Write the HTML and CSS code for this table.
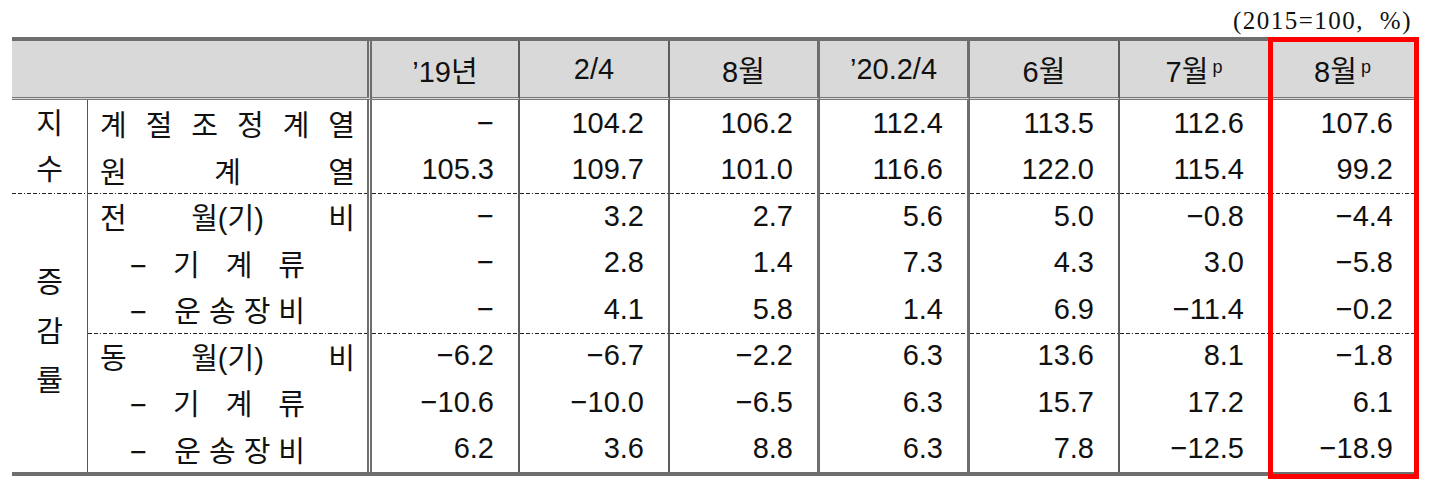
FILE: index.html
```html
<!DOCTYPE html>
<html lang="ko">
<head>
<meta charset="utf-8">
<title>지수 및 증감률</title>
<link rel="stylesheet" href="styles.css">
</head>
<body>
<div class="sheet">
  <div class="unit">(2015=100, %)</div>
  <div class="tablebox">
    <table class="stats">
      <colgroup>
        <col class="w-grp"><col class="w-lbl"><col class="w-c1"><col class="w-c"><col class="w-c"><col class="w-c"><col class="w-c"><col class="w-c"><col class="w-last">
      </colgroup>
      <thead>
        <tr class="head">
          <th colspan="2" class="bd"></th>
          <th class="b2">’19년</th>
          <th class="b2">2/4</th>
          <th class="b3">8월</th>
          <th class="b3">’20.2/4</th>
          <th class="b2">6월</th>
          <th class="b2">7월<sup>p</sup></th>
          <th>8월<sup>p</sup></th>
        </tr>
      </thead>
      <tbody>
        <tr>
          <td rowspan="2" class="grp">지<br>수</td>
          <td class="lbl bd"><span class="spread">계 절 조 정 계 열</span></td>
          <td class="num b2">−</td><td class="num b2">104.2</td><td class="num b3">106.2</td><td class="num b3">112.4</td><td class="num b2">113.5</td><td class="num b2">112.6</td><td class="num last">107.6</td>
        </tr>
        <tr>
          <td class="lbl bd"><span class="spread">원 계 열</span></td>
          <td class="num b2">105.3</td><td class="num b2">109.7</td><td class="num b3">101.0</td><td class="num b3">116.6</td><td class="num b2">122.0</td><td class="num b2">115.4</td><td class="num last">99.2</td>
        </tr>
        <tr class="sep">
          <td rowspan="6" class="grp grp-tall">증<br>감<br>률</td>
          <td class="lbl bd"><span class="spread">전 월(기) 비</span></td>
          <td class="num b2">−</td><td class="num b2">3.2</td><td class="num b3">2.7</td><td class="num b3">5.6</td><td class="num b2">5.0</td><td class="num b2">−0.8</td><td class="num last">−4.4</td>
        </tr>
        <tr>
          <td class="lbl bd"><span class="spread sub">− 기 계 류</span></td>
          <td class="num b2">−</td><td class="num b2">2.8</td><td class="num b3">1.4</td><td class="num b3">7.3</td><td class="num b2">4.3</td><td class="num b2">3.0</td><td class="num last">−5.8</td>
        </tr>
        <tr>
          <td class="lbl bd"><span class="spread sub">− <span class="tight">운송장비</span></span></td>
          <td class="num b2">−</td><td class="num b2">4.1</td><td class="num b3">5.8</td><td class="num b3">1.4</td><td class="num b2">6.9</td><td class="num b2">−11.4</td><td class="num last">−0.2</td>
        </tr>
        <tr class="sep">
          <td class="lbl bd"><span class="spread">동 월(기) 비</span></td>
          <td class="num b2">−6.2</td><td class="num b2">−6.7</td><td class="num b3">−2.2</td><td class="num b3">6.3</td><td class="num b2">13.6</td><td class="num b2">8.1</td><td class="num last">−1.8</td>
        </tr>
        <tr>
          <td class="lbl bd"><span class="spread sub">− 기 계 류</span></td>
          <td class="num b2">−10.6</td><td class="num b2">−10.0</td><td class="num b3">−6.5</td><td class="num b3">6.3</td><td class="num b2">15.7</td><td class="num b2">17.2</td><td class="num last">6.1</td>
        </tr>
        <tr>
          <td class="lbl bd"><span class="spread sub">− <span class="tight">운송장비</span></span></td>
          <td class="num b2">6.2</td><td class="num b2">3.6</td><td class="num b3">8.8</td><td class="num b3">6.3</td><td class="num b2">7.8</td><td class="num b2">−12.5</td><td class="num last">−18.9</td>
        </tr>
      </tbody>
    </table>
    <div class="mark"></div>
  </div>
</div>
</body>
</html>
```

FILE: styles.css
```css
* { box-sizing: border-box; }
html, body { margin: 0; padding: 0; background: #fff; }
body {
  font-family: "Liberation Sans", "Noto Sans CJK KR", sans-serif;
  color: #111;
}
.sheet {
  width: 1430px;
  height: 490px;
  padding-left: 12px;
  overflow: hidden;
}
.unit {
  width: 1403px;
  height: 37px;
  padding: 4px 3px 0 0;
  text-align: right;
  font-family: "Liberation Serif", "Noto Sans CJK KR", serif;
  font-size: 25px;
  line-height: 33px;
  letter-spacing: 1.5px;
  word-spacing: 8px;
  white-space: nowrap;
}
.tablebox {
  position: relative;
  width: 1403px;
}
.stats {
  width: 1403px;
  table-layout: fixed;
  border-collapse: separate;
  border-spacing: 0;
  border-top: 4px solid #6e6e6e;
  border-bottom: 4px solid #6e6e6e;
  font-size: 29px;
}
.w-grp { width: 76px; }
.w-lbl { width: 284px; }
.w-c1 { width: 148px; }
.w-c { width: 150px; }
.w-last { width: 145px; }

.stats th, .stats td { padding: 0; }
.stats .head th {
  height: 59px;
  background: #d9d9d9;
  font-weight: normal;
  text-align: center;
  border-bottom: 3px double #777;
  white-space: nowrap;
}
.head sup {
  font-size: 18px;
  line-height: 0;
  vertical-align: 9px;
  margin-left: 4px;
}
.stats tbody td { height: 46.5px; }

.stats .bd { border-right: 5px double #6e6e6e; }
.stats .b2 { border-right: 2px solid #5c5c5c; }
.stats .b3 { border-right: 3px solid #6e6e6e; }

.stats .grp {
  text-align: center;
  line-height: 46px;
  border-right: 1px solid #555;
}
.stats .grp-tall { line-height: 49px; }

.stats .lbl { padding: 0 12px 0 12px; }
.spread {
  display: block;
  text-align: justify;
  text-align-last: justify;
  white-space: nowrap;
}
.spread.sub {
  margin-left: 30px;
  width: 175px;
}
.tight {
  letter-spacing: 8px;
  margin-right: -8px;
}

.stats .num {
  text-align: right;
  padding-right: 24px;
  white-space: nowrap;
}
.stats .num.last { padding-right: 22px; }

.stats .sep td {
  background-image: repeating-linear-gradient(90deg, #222 0 4px, transparent 4px 6px, #222 6px 10px, transparent 10px 12px, #222 12px 13px, transparent 13px 15px);
  background-size: 100% 1px;
  background-position: left top;
  background-repeat: no-repeat;
}

.mark {
  position: absolute;
  left: 1256px;
  top: 0;
  width: 151px;
  height: 442px;
  border: 5px solid #ff0000;
}
```
